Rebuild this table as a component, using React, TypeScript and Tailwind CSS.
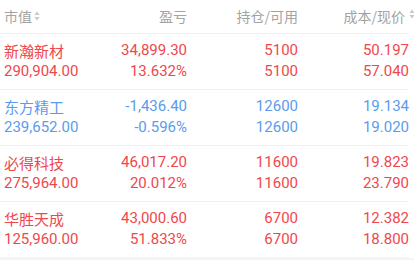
import React from "react";

type Row = {
  name: string;
  value: string;
  pl: string;
  plPct: string;
  hold: string;
  avail: string;
  cost: string;
  price: string;
  up: boolean;
};

const rows: Row[] = [
  { name: "新瀚新材", value: "290,904.00", pl: "34,899.30", plPct: "13.632%", hold: "5100", avail: "5100", cost: "50.197", price: "57.040", up: true },
  { name: "东方精工", value: "239,652.00", pl: "-1,436.40", plPct: "-0.596%", hold: "12600", avail: "12600", cost: "19.134", price: "19.020", up: false },
  { name: "必得科技", value: "275,964.00", pl: "46,017.20", plPct: "20.012%", hold: "11600", avail: "11600", cost: "19.823", price: "23.790", up: true },
  { name: "华胜天成", value: "125,960.00", pl: "43,000.60", plPct: "51.833%", hold: "6700", avail: "6700", cost: "12.382", price: "18.800", up: true },
];

function SortIcon() {
  return (
    <svg width="6" height="10" viewBox="0 0 6 10" className="shrink-0">
      <path d="M3 0.5 L5.6 4 L0.4 4 Z" fill="#c9c9c9" />
      <path d="M3 9.5 L5.6 6 L0.4 6 Z" fill="#c9c9c9" />
    </svg>
  );
}

const num = { fontFamily: "Roboto, 'Noto Sans CJK SC', sans-serif" } as const;
const cjk = { fontFamily: "'Noto Sans CJK SC', sans-serif" } as const;

export default function App() {
  return (
    <div className="w-[414px] h-[260px] overflow-hidden bg-[#f5f5f5] flex flex-col">
      <div className="bg-white w-full">
        <div className="w-[409px] h-[34px] flex items-center border-b border-[#f2f2f2] pl-[4px] text-[14px] text-[#a3a3a3] pb-[1px]" style={cjk}>
          <div className="w-[100px] flex items-center gap-[2px]">
            <span>市值</span>
            <SortIcon />
          </div>
          <div className="w-[83px] text-right">盈亏</div>
          <div className="w-[111px] text-right">持仓/可用</div>
          <div className="w-[111px] flex justify-end items-center relative">
            <span className="mr-[4px]">成本/现价</span>
            <div className="absolute left-[111px] top-[3px]">
              <SortIcon />
            </div>
          </div>
        </div>
        {rows.map((r, i) => {
          const color = r.up ? "text-[#f0474c]" : "text-[#5a9bee]";
          return (
            <div
              key={i}
              className={`w-[409px] h-[56px] flex pl-[4px] pt-[6px] border-b border-[#f2f2f2] ${color} text-[15px] leading-[21px]`}
            >
              <div className="w-[100px] flex flex-col">
                <span style={cjk}>{r.name}</span>
                <span style={num}>{r.value}</span>
              </div>
              <div className="w-[83px] flex flex-col items-end" style={num}>
                <span>{r.pl}</span>
                <span>{r.plPct}</span>
              </div>
              <div className="w-[111px] flex flex-col items-end" style={num}>
                <span>{r.hold}</span>
                <span>{r.avail}</span>
              </div>
              <div className="w-[111px] flex flex-col items-end" style={num}>
                <span>{r.cost}</span>
                <span>{r.price}</span>
              </div>
            </div>
          );
        })}
      </div>
    </div>
  );
}
